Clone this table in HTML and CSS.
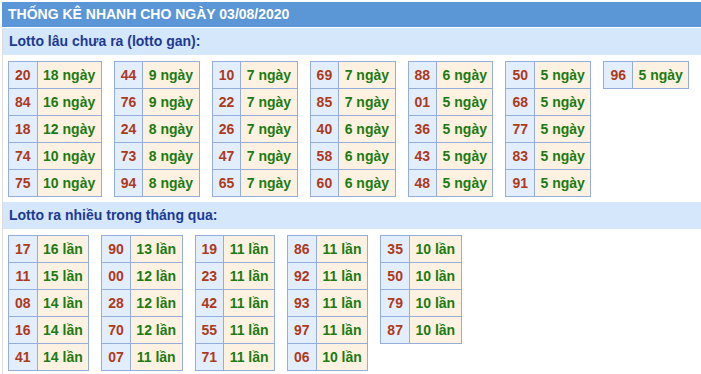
FILE: index.html
```html
<!DOCTYPE html>
<html lang="vi">
<head>
<meta charset="utf-8">
<title>Thống kê nhanh</title>
<link rel="stylesheet" href="styles.css">
</head>
<body>
<div class="box">
  <div class="title">THỐNG KÊ NHANH CHO NGÀY 03/08/2020</div>
  <div class="content">
    <div class="sub">Lotto lâu chưa ra (lotto gan):</div>
    <div class="tables">
      <table><tr><td class="n">20</td><td class="v">18 ngày</td></tr><tr><td class="n">84</td><td class="v">16 ngày</td></tr><tr><td class="n">18</td><td class="v">12 ngày</td></tr><tr><td class="n">74</td><td class="v">10 ngày</td></tr><tr><td class="n">75</td><td class="v">10 ngày</td></tr></table>
      <table><tr><td class="n">44</td><td class="v">9 ngày</td></tr><tr><td class="n">76</td><td class="v">9 ngày</td></tr><tr><td class="n">24</td><td class="v">8 ngày</td></tr><tr><td class="n">73</td><td class="v">8 ngày</td></tr><tr><td class="n">94</td><td class="v">8 ngày</td></tr></table>
      <table><tr><td class="n">10</td><td class="v">7 ngày</td></tr><tr><td class="n">22</td><td class="v">7 ngày</td></tr><tr><td class="n">26</td><td class="v">7 ngày</td></tr><tr><td class="n">47</td><td class="v">7 ngày</td></tr><tr><td class="n">65</td><td class="v">7 ngày</td></tr></table>
      <table><tr><td class="n">69</td><td class="v">7 ngày</td></tr><tr><td class="n">85</td><td class="v">7 ngày</td></tr><tr><td class="n">40</td><td class="v">6 ngày</td></tr><tr><td class="n">58</td><td class="v">6 ngày</td></tr><tr><td class="n">60</td><td class="v">6 ngày</td></tr></table>
      <table><tr><td class="n">88</td><td class="v">6 ngày</td></tr><tr><td class="n">01</td><td class="v">5 ngày</td></tr><tr><td class="n">36</td><td class="v">5 ngày</td></tr><tr><td class="n">43</td><td class="v">5 ngày</td></tr><tr><td class="n">48</td><td class="v">5 ngày</td></tr></table>
      <table><tr><td class="n">50</td><td class="v">5 ngày</td></tr><tr><td class="n">68</td><td class="v">5 ngày</td></tr><tr><td class="n">77</td><td class="v">5 ngày</td></tr><tr><td class="n">83</td><td class="v">5 ngày</td></tr><tr><td class="n">91</td><td class="v">5 ngày</td></tr></table>
      <table><tr><td class="n">96</td><td class="v">5 ngày</td></tr></table>
    </div>
    <div class="sub">Lotto ra nhiều trong tháng qua:</div>
    <div class="tables">
      <table><tr><td class="n">17</td><td class="v">16 lần</td></tr><tr><td class="n">11</td><td class="v">15 lần</td></tr><tr><td class="n">08</td><td class="v">14 lần</td></tr><tr><td class="n">16</td><td class="v">14 lần</td></tr><tr><td class="n">41</td><td class="v">14 lần</td></tr></table>
      <table><tr><td class="n">90</td><td class="v">13 lần</td></tr><tr><td class="n">00</td><td class="v">12 lần</td></tr><tr><td class="n">28</td><td class="v">12 lần</td></tr><tr><td class="n">70</td><td class="v">12 lần</td></tr><tr><td class="n">07</td><td class="v">11 lần</td></tr></table>
      <table><tr><td class="n">19</td><td class="v">11 lần</td></tr><tr><td class="n">23</td><td class="v">11 lần</td></tr><tr><td class="n">42</td><td class="v">11 lần</td></tr><tr><td class="n">55</td><td class="v">11 lần</td></tr><tr><td class="n">71</td><td class="v">11 lần</td></tr></table>
      <table><tr><td class="n">86</td><td class="v">11 lần</td></tr><tr><td class="n">92</td><td class="v">11 lần</td></tr><tr><td class="n">93</td><td class="v">11 lần</td></tr><tr><td class="n">97</td><td class="v">11 lần</td></tr><tr><td class="n">06</td><td class="v">10 lần</td></tr></table>
      <table><tr><td class="n">35</td><td class="v">10 lần</td></tr><tr><td class="n">50</td><td class="v">10 lần</td></tr><tr><td class="n">79</td><td class="v">10 lần</td></tr><tr><td class="n">87</td><td class="v">10 lần</td></tr></table>
    </div>
  </div>
</div>
</body>
</html>
```

FILE: styles.css
```css
html, body {
  margin: 0;
  padding: 0;
  overflow: hidden;
  background: #ffffff;
}
body {
  font-family: "Liberation Sans", Arial, sans-serif;
  font-size: 14px;
  font-weight: bold;
}
.box {
  margin: 2px 0 0 2px;
  width: 730px;
}
.title {
  height: 25px;
  line-height: 25px;
  background: #5b96d6;
  color: #ffffff;
  padding-left: 6px;
}
.content {
  margin-top: 1px;
  border-left: 1px solid #dcdcdc;
  border-bottom: 1px solid #dcdcdc;
}
.sub {
  height: 27px;
  line-height: 27px;
  background: #d5e7fa;
  color: #1c3a94;
  padding-left: 6px;
}
.tables {
  display: flex;
  align-items: flex-start;
  gap: 12px;
  padding: 6px 0 5px 5px;
}
table {
  border-collapse: collapse;
}
td {
  border: 1px solid #95addb;
  height: 27px;
  text-align: center;
  box-sizing: border-box;
}
td.n {
  background: #e2eefc;
  color: #ad3a1c;
  padding: 0 6px;
}
td.v {
  background: #fdf2e1;
  color: #1e7a12;
  padding: 0 5.5px;
}
```
